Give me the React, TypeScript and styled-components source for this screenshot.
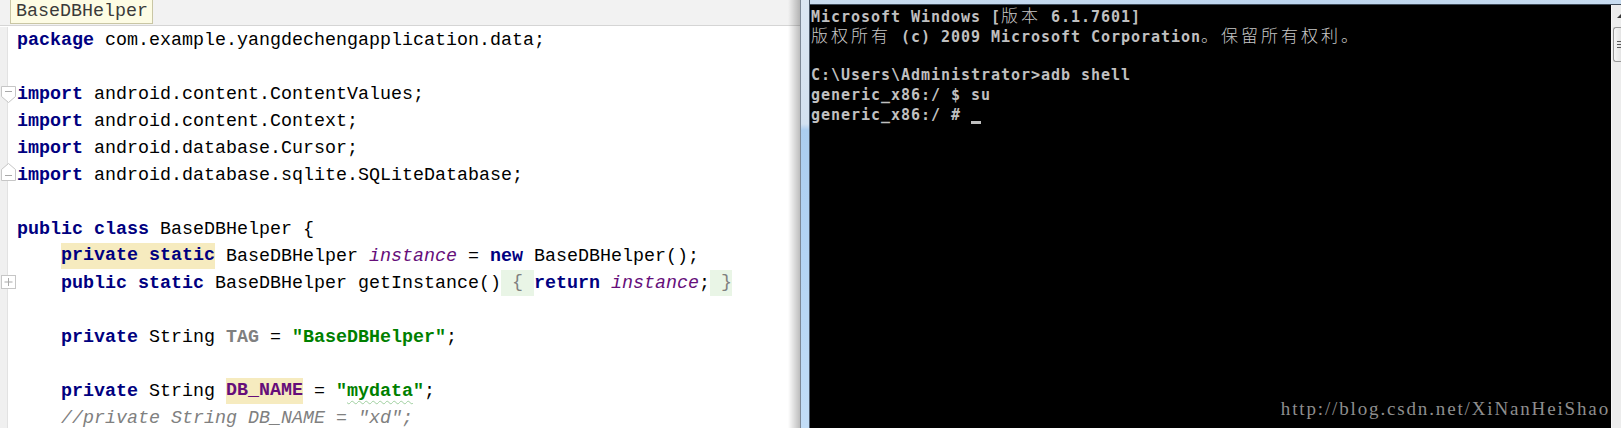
import React from "react";
import styled, { createGlobalStyle } from "styled-components";

const Global = createGlobalStyle`
  html, body { margin: 0; padding: 0; background: #fff; overflow: hidden; }
  #root { width: 1621px; height: 428px; }
`;

const Page = styled.div`
  display: flex;
  width: 1621px;
  height: 428px;
  overflow: hidden;
`;

/* ---------------- editor ---------------- */

const Editor = styled.div`
  display: flex;
  width: 800px;
  flex: none;
`;

const EditorMain = styled.div`
  flex: 1;
  min-width: 0;
  display: flex;
  flex-direction: column;
  background: #fff;
`;

const EdgeShade = styled.div`
  width: 12px;
  flex: none;
  background: linear-gradient(to right, rgba(0, 0, 0, 0), rgba(0, 0, 0, 0.26)),
    linear-gradient(to bottom, #f2f2f2 0 25px, #d5d5d5 25px 26px, #fff 26px);
`;

const NavBar = styled.div`
  height: 25px;
  flex: none;
  border-bottom: 1px solid #d5d5d5;
  background: #f2f2f2;
  display: flex;
  align-items: flex-start;
  padding-left: 10px;
`;

const Crumb = styled.div`
  height: 24px;
  box-sizing: border-box;
  border: 1px solid #c9c6a4;
  border-top: none;
  background: #fdfce4;
  padding: 0 4px 0 5px;
  font-family: "Liberation Mono", monospace;
  font-size: 18.33px;
  line-height: 23px;
  color: #3a3a3a;
`;

const CodeArea = styled.div`
  flex: 1;
  padding-top: 1px;
  display: flex;
  flex-direction: column;
  overflow: hidden;
`;

const Row = styled.div`
  position: relative;
  height: 27px;
  flex: none;
  display: flex;
`;

const GutterCell = styled.div`
  width: 7px;
  flex: none;
  background: #f0f0f0;
  border-right: 1px solid #e2e2e2;
`;

const CodeText = styled.div`
  padding-left: 9px;
  font-family: "Liberation Mono", "Courier New", monospace;
  font-size: 18.33px;
  line-height: 27px;
  white-space: pre;
  color: #000;
`;

type Kind = "kw" | "str" | "field" | "sfield" | "unused" | "comment" | "fold" | "plain";

const kindStyle: Record<Kind, string> = {
  kw: "color:#000080;font-weight:bold;",
  str: "color:#008000;font-weight:bold;",
  field: "color:#660e7a;font-weight:bold;",
  sfield: "color:#660e7a;font-style:italic;",
  unused: "color:#808080;font-weight:bold;",
  comment: "color:#808080;font-style:italic;",
  fold: "color:#808080;",
  plain: "color:#000;",
};

const Tok = styled.span<{ $k: Kind; $typo?: boolean }>`
  ${(p) => kindStyle[p.$k]}
  ${(p) =>
    p.$typo
      ? `text-decoration: underline wavy #9fcf9f; text-decoration-thickness: 1px; text-underline-offset: 4px;`
      : ""}
`;

const Mark = styled.span<{ $tone: "warn" | "fold" }>`
  display: inline-block;
  line-height: 26px;
  vertical-align: top;
  background: ${(p) => (p.$tone === "warn" ? "#f6ebbf" : "#e9f5e6")};
`;

const FoldIcon = styled.svg<{ $top: number }>`
  position: absolute;
  left: 1px;
  top: ${(p) => p.$top}px;
  overflow: visible;
`;

type T = { t: string; k?: Kind; m?: "warn" | "fold"; typo?: boolean };
type Line = { toks: T[]; fold?: "open" | "close" | "plus" };

const line = (...toks: T[]): T[] => toks;

const code: Line[] = [
  { toks: line({ t: "package", k: "kw" }, { t: " com.example.yangdechengapplication.data;" }) },
  { toks: [] },
  { toks: line({ t: "import", k: "kw" }, { t: " android.content.ContentValues;" }), fold: "open" },
  { toks: line({ t: "import", k: "kw" }, { t: " android.content.Context;" }) },
  { toks: line({ t: "import", k: "kw" }, { t: " android.database.Cursor;" }) },
  { toks: line({ t: "import", k: "kw" }, { t: " android.database.sqlite.SQLiteDatabase;" }), fold: "close" },
  { toks: [] },
  { toks: line({ t: "public class", k: "kw" }, { t: " BaseDBHelper {" }) },
  {
    toks: line(
      { t: "    " },
      { t: "private static", k: "kw", m: "warn" },
      { t: " BaseDBHelper " },
      { t: "instance", k: "sfield" },
      { t: " = " },
      { t: "new", k: "kw" },
      { t: " BaseDBHelper();" }
    ),
  },
  {
    toks: line(
      { t: "    " },
      { t: "public static", k: "kw" },
      { t: " BaseDBHelper getInstance()" },
      { t: " { ", k: "fold", m: "fold" },
      { t: "return", k: "kw" },
      { t: " " },
      { t: "instance", k: "sfield" },
      { t: ";" },
      { t: " }", k: "fold", m: "fold" }
    ),
    fold: "plus",
  },
  { toks: [] },
  {
    toks: line(
      { t: "    " },
      { t: "private", k: "kw" },
      { t: " String " },
      { t: "TAG", k: "unused" },
      { t: " = " },
      { t: "\"BaseDBHelper\"", k: "str" },
      { t: ";" }
    ),
  },
  { toks: [] },
  {
    toks: line(
      { t: "    " },
      { t: "private", k: "kw" },
      { t: " String " },
      { t: "DB_NAME", k: "field", m: "warn" },
      { t: " = " },
      { t: "\"", k: "str" },
      { t: "mydata", k: "str", typo: true },
      { t: "\"", k: "str" },
      { t: ";" }
    ),
  },
  { toks: line({ t: "    " }, { t: "//private String DB_NAME = \"xd\";", k: "comment" }) },
];

const Fold = ({ kind }: { kind: "open" | "close" | "plus" }) => {
  if (kind === "open")
    return (
      <FoldIcon $top={5} width={15} height={17} viewBox="0 0 15 17">
        <path d="M0.5 0.5 H14.5 V10.5 L7.5 16.5 L0.5 10.5 Z" fill="#fff" stroke="#c6c6c6" />
        <path d="M4 5.5 H11" stroke="#a9a9a9" />
      </FoldIcon>
    );
  if (kind === "close")
    return (
      <FoldIcon $top={1} width={15} height={18} viewBox="0 0 15 18">
        <path d="M0.5 6.5 L7.5 0.5 L14.5 6.5 V17.5 H0.5 Z" fill="#fff" stroke="#c6c6c6" />
        <path d="M4 12.5 H11" stroke="#a9a9a9" />
      </FoldIcon>
    );
  return (
    <FoldIcon $top={5} width={15} height={15} viewBox="0 0 15 15">
      <rect x={0.5} y={0.5} width={14} height={13} fill="#fff" stroke="#c6c6c6" />
      <path d="M3.5 7 H11.5 M7.5 3 V11" stroke="#a9a9a9" />
    </FoldIcon>
  );
};

const renderTok = (tk: T, i: number) => {
  const inner = (
    <Tok key={i} $k={tk.k ?? "plain"} $typo={tk.typo}>
      {tk.t}
    </Tok>
  );
  return tk.m ? (
    <Mark key={i} $tone={tk.m}>
      {inner}
    </Mark>
  ) : (
    inner
  );
};

/* ---------------- window frame + console ---------------- */

const Frame = styled.div`
  width: 10px;
  flex: none;
  box-sizing: border-box;
  border-left: 1px solid #7d8896;
  border-right: 1px solid #4b5868;
  background: linear-gradient(
    to bottom,
    #dbe6f2 0,
    #d3e1f0 124px,
    #abcdef 130px,
    #b4d4f4 60%,
    #c2ddf7 100%
  );
`;

const ConsoleWin = styled.div`
  flex: 1;
  min-width: 0;
  display: flex;
  flex-direction: column;
`;

const TopBand = styled.div`
  height: 4px;
  flex: none;
  border-bottom: 1px solid #3f4c5a;
  background: linear-gradient(to right, #c9dcef, #bdd5ee 60%, #c8dcf0);
`;

const ConsoleBody = styled.div`
  flex: 1;
  display: flex;
  min-height: 0;
`;

const Screen = styled.div`
  position: relative;
  flex: 1;
  background: #000;
  padding-left: 1px;
  color: #c0c0c0;
  font-family: "DejaVu Sans Mono", monospace;
  font-weight: bold;
  font-size: 15px;
  letter-spacing: 0.97px;
  line-height: 20px;
  overflow: hidden;
`;

const TermLine = styled.div`
  height: 20px;
  white-space: pre;
`;

const Wide = styled.span`
  font-family: "Noto Sans CJK SC", sans-serif;
  font-weight: 300;
  font-size: 17px;
  line-height: 20px;
  letter-spacing: 3px;
  color: #c8c8c8;
`;

const Cursor = styled.span`
  display: inline-block;
  width: 10px;
  height: 3px;
  background: #c0c0c0;
  vertical-align: -4px;
`;

const Watermark = styled.div`
  position: absolute;
  right: 1px;
  bottom: 9px;
  font-family: "Liberation Serif", serif;
  font-weight: normal;
  font-size: 19px;
  line-height: 20px;
  letter-spacing: 1.85px;
  color: #8e8e8e;
  white-space: nowrap;
`;

const ScrollTrack = styled.div`
  width: 10px;
  flex: none;
  background: #ececec;
  border-left: 1px solid #f6f6f6;
  box-sizing: border-box;
  display: flex;
  flex-direction: column;
`;

const ScrollArrow = styled.div`
  height: 22px;
  flex: none;
  display: flex;
  align-items: center;
  justify-content: flex-end;
  &::after {
    content: "";
    width: 0;
    height: 0;
    border-left: 4px solid transparent;
    border-bottom: 4px solid #3a3a3a;
  }
`;

const Thumb = styled.div`
  height: 35px;
  flex: none;
  margin-left: 1px;
  box-sizing: border-box;
  border: 1px solid #979797;
  border-right: none;
  border-radius: 3px 0 0 3px;
  background: linear-gradient(to right, #f6f6f6, #e4e4e4);
  display: flex;
  align-items: center;
  justify-content: flex-end;
`;

const Grip = styled.div`
  width: 4px;
  height: 8px;
  background: repeating-linear-gradient(
    to bottom,
    #5a5a5a 0 1px,
    transparent 1px 3px
  );
`;

const CJK = /([\u3000-\u303f\u3400-\u9fff\uff00-\uffef]+)/;

const Term = ({ text }: { text: string }) => (
  <>
    {text.split(CJK).map((part, i) =>
      CJK.test(part) ? <Wide key={i}>{part}</Wide> : <React.Fragment key={i}>{part}</React.Fragment>
    )}
  </>
);

const termLines = [
  "Microsoft Windows [版本 6.1.7601]",
  "版权所有 (c) 2009 Microsoft Corporation。保留所有权利。",
  "",
  "C:\\Users\\Administrator>adb shell",
  "generic_x86:/ $ su",
];

export default function App() {
  return (
    <>
      <Global />
      <Page>
        <Editor>
          <EditorMain>
            <NavBar>
              <Crumb>BaseDBHelper</Crumb>
            </NavBar>
            <CodeArea>
              {code.map((ln, i) => (
                <Row key={i}>
                  <GutterCell />
                  <CodeText>{ln.toks.map(renderTok)}</CodeText>
                  {ln.fold && <Fold kind={ln.fold} />}
                </Row>
              ))}
            </CodeArea>
          </EditorMain>
          <EdgeShade />
        </Editor>
        <Frame />
        <ConsoleWin>
          <TopBand />
          <ConsoleBody>
            <Screen>
              {termLines.map((t, i) => (
                <TermLine key={i}>
                  <Term text={t} />
                </TermLine>
              ))}
              <TermLine>
                generic_x86:/ # <Cursor />
              </TermLine>
              <Watermark>http://blog.csdn.net/XiNanHeiShao</Watermark>
            </Screen>
            <ScrollTrack>
              <ScrollArrow />
              <Thumb>
                <Grip />
              </Thumb>
            </ScrollTrack>
          </ConsoleBody>
        </ConsoleWin>
      </Page>
    </>
  );
}
